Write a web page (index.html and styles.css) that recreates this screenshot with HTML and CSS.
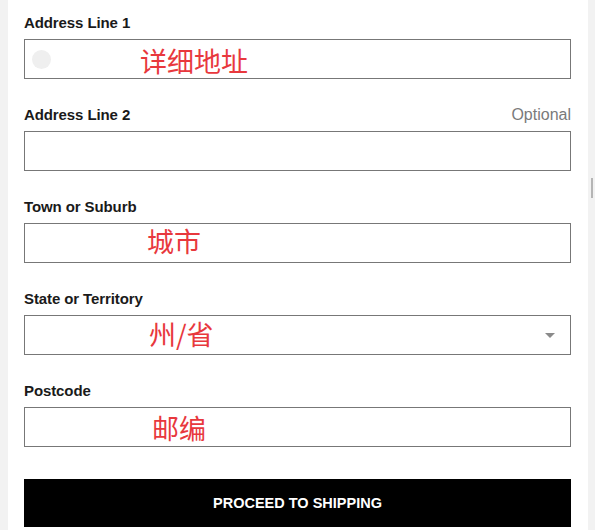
FILE: index.html
```html
<!DOCTYPE html>
<html lang="en">
<head>
    <meta charset="UTF-8">
    <meta name="viewport" content="width=device-width, initial-scale=1.0">
    <title>Address</title>
    <link rel="stylesheet" href="styles.css">
</head>
<body>

    <div class="card">
        <div class="field">
            <div class="label-row">
                <span class="label">Address Line 1</span>
            </div>
            <div class="input">
                <span class="autofill"></span>
                <span class="note note-address">详细地址</span>
            </div>
        </div>

        <div class="field">
            <div class="label-row">
                <span class="label">Address Line 2</span>
                <span class="optional">Optional</span>
            </div>
            <div class="input"></div>
        </div>

        <div class="field">
            <div class="label-row">
                <span class="label">Town or Suburb</span>
            </div>
            <div class="input">
                <span class="note note-town">城市</span>
            </div>
        </div>

        <div class="field">
            <div class="label-row">
                <span class="label">State or Territory</span>
            </div>
            <div class="input select">
                <span class="note note-state">州/省</span>
                <span class="caret"></span>
            </div>
        </div>

        <div class="field">
            <div class="label-row">
                <span class="label">Postcode</span>
            </div>
            <div class="input">
                <span class="note note-post">邮编</span>
            </div>
        </div>

        <button class="proceed">PROCEED TO SHIPPING</button>
    </div>

    <div class="scroll-thumb"></div>

</body>
</html>
```

FILE: styles.css
```css
body {
    margin: 0;
    background: #f2f2f2;
    font-family: 'Liberation Sans', Arial, sans-serif;
    color: #1a1a1a;
    overflow: hidden;
}

.card {
    margin-left: 8px;
    width: 580px;
    box-sizing: border-box;
    min-height: 540px;
    padding: 12px 17px 0 16px;
    background: #fff;
}

.field {
    margin-bottom: 25px;
}

.label-row {
    display: flex;
    justify-content: space-between;
    align-items: center;
    height: 20px;
    margin-bottom: 7px;
}

.label {
    font-size: 15px;
    font-weight: bold;
    letter-spacing: -0.1px;
}

.optional {
    font-size: 16px;
    color: #7a7a7a;
    margin-top: 2px;
}

.input {
    display: flex;
    align-items: center;
    height: 40px;
    box-sizing: border-box;
    border: 1px solid #777;
    background: #fff;
}

/* little grey autofill bubble */
.autofill {
    width: 19px;
    height: 19px;
    margin-left: 7px;
    border-radius: 50%;
    background: #efefef;
}

/* red annotation text */
.note {
    font-family: 'Noto Sans CJK SC', sans-serif;
    font-size: 27px;
    line-height: 1;
    color: #e8383d;
}

.note-address {
    margin-left: 89px;
    margin-top: 2px;
}

.note-town {
    margin-left: 122px;
    margin-top: -5px;
}

.note-state {
    margin-left: 124px;
    margin-top: -3px;
}

.note-post {
    margin-left: 127px;
    margin-top: 1px;
}

.select {
    justify-content: space-between;
}

.caret {
    width: 0;
    height: 0;
    margin-right: 15px;
    border-left: 5px solid transparent;
    border-right: 5px solid transparent;
    border-top: 5px solid #8a8a8a;
}

.proceed {
    display: block;
    width: 100%;
    height: 48px;
    margin-top: 32px;
    border: none;
    background: #000;
    color: #fff;
    font-family: 'Liberation Sans', Arial, sans-serif;
    font-size: 14.5px;
    font-weight: bold;
}

.scroll-thumb {
    position: absolute;
    left: 591px;
    top: 178px;
    width: 2px;
    height: 20px;
    background: #b5b5b5;
}
```
